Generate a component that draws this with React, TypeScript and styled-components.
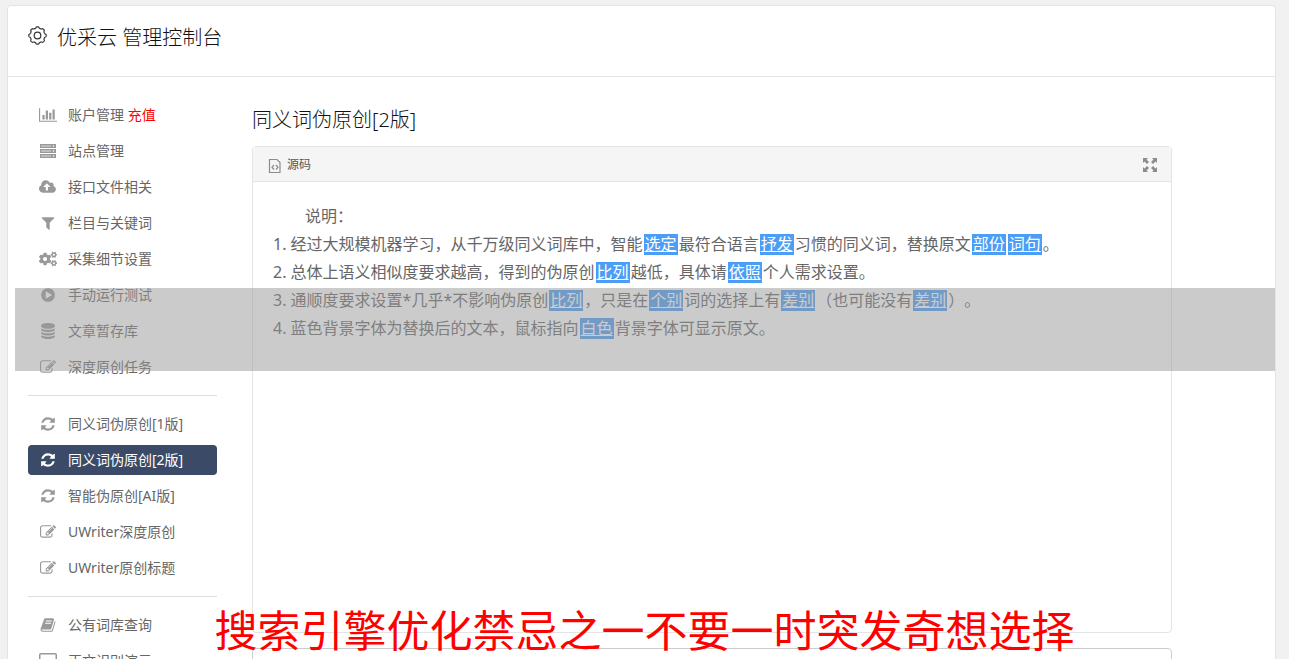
import React, { ReactNode } from "react";
import styled, { createGlobalStyle, css } from "styled-components";
import { FaCogs } from "react-icons/fa";

const Global = createGlobalStyle`
  *, *::before, *::after { box-sizing: border-box; }
  body {
    margin: 0;
    background: #f1f1f1;
    color: #666;
    font-family: "Noto Sans", "Noto Sans CJK SC", sans-serif;
    font-size: 14px;
    line-height: 20px;
    text-spacing-trim: space-all;
  }
  #root { height: 100vh; overflow: hidden; }
`;

const Page = styled.div`
  position: relative;
  height: 100vh;
  overflow: hidden;
  padding: 5px 13px 0 7px;
`;

const Panel = styled.div`
  min-height: 900px;
  background: #fff;
  border: 1px solid #e4e4e4;
  border-radius: 4px;
`;

const Header = styled.header`
  display: flex;
  align-items: center;
  gap: 9px;
  height: 71px;
  padding: 0 20px 6px;
  border-bottom: 1px solid #e4e4e4;
`;

const Title = styled.h1`
  margin: 0;
  color: #111;
  font-size: 20px;
  font-weight: 300;
  line-height: 28px;
`;

const Columns = styled.div`
  display: flex;
  padding: 23px 103px 0 20px;
`;

const Sidebar = styled.nav`
  flex: none;
  width: 189px;
  margin-right: 35px;
`;

const Group = styled.ul`
  margin: 0;
  padding: 0 0 13px;
  list-style: none;

  & + & {
    border-top: 1px solid #ddd;
    padding-top: 13px;
  }
`;

const Item = styled.li`
  & + & { margin-top: 6px; }
`;

const ItemLink = styled.a<{ $active?: boolean }>`
  display: flex;
  align-items: center;
  height: 30px;
  padding: 0 10px;
  gap: 10px;
  border-radius: 4px;
  color: #666;
  text-decoration: none;
  white-space: nowrap;
  svg { color: #999; }
  ${(p) =>
    p.$active &&
    css`
      background: #3b4b67;
      color: #fff;
      svg { color: #fff; }
    `}
`;

const IconSlot = styled.span`
  display: flex;
  justify-content: center;
  width: 20px;
`;

const Recharge = styled.span`
  color: #f00;
`;

const Main = styled.main`
  flex: 1;
  min-width: 0;
`;

const Heading = styled.h2`
  margin: 5px 0 11px;
  color: #111;
  font-size: 20px;
  font-weight: 300;
  line-height: 30px;
`;

const Editor = styled.section`
  height: 487px;
  border: 1px solid #e4e4e4;
  border-radius: 4px;
`;

const Toolbar = styled.div`
  display: flex;
  align-items: center;
  justify-content: space-between;
  height: 35px;
  padding: 1px 13px 0 15px;
  background: #f5f5f5;
  border-bottom: 1px solid #e4e4e4;
`;

const ToolButton = styled.button`
  display: flex;
  align-items: center;
  gap: 6px;
  padding: 0;
  border: 0;
  background: none;
  color: #555;
  font: inherit;
  font-size: 12px;
  svg { color: #8c8c8c; }
`;

const Content = styled.div`
  padding: 20px;
  font-size: 16px;
  line-height: 28px;
`;

const Intro = styled.p`
  margin: 0;
  text-indent: 2em;
`;

const Line = styled.p`
  margin: 0;
`;

const Swap = styled.u`
  margin: 0 1px;
  padding: 0 1px;
  background: linear-gradient(#4b9df5, #4b9df5) center / 100% 21px no-repeat;
  color: #fff;
`;

const Output = styled.textarea`
  display: block;
  width: 100%;
  height: 120px;
  margin-top: 15px;
  border: 1px solid #ccc;
  border-radius: 4px;
  resize: none;
`;

const Shade = styled.div`
  position: absolute;
  top: 288px;
  right: 14px;
  left: 15px;
  height: 83px;
  background: rgba(151, 151, 151, 0.5);
`;

const Caption = styled.p`
  position: absolute;
  right: 0;
  bottom: 0;
  left: 0;
  margin: 0;
  color: #f00;
  font-size: 43px;
  line-height: 56px;
  text-align: center;
  white-space: nowrap;
`;

const Glyph = ({ d, w = 1792, size = 16 }: { d: string; w?: number; size?: number }) => (
  <svg height={size} width={Math.round((size * w) / 1792)} viewBox={`0 0 ${w} 1792`} fill="currentColor" aria-hidden="true">
    <path d={d} />
  </svg>
);

const paths = {
  chart: "M640 896v512h-256v-512h256zm384-512v1024h-256v-1024h256zm1024 1152v128h-2048v-1536h128v1408h1920zm-640-896v768h-256v-768h256zm384-384v1152h-256v-1152h256z",
  cloud: "M1280 864q0-14-9-23l-352-352q-9-9-23-9t-23 9l-351 351q-10 12-10 24 0 14 9 23t23 9h224v352q0 13 9.5 22.5t22.5 9.5h192q13 0 22.5-9.5t9.5-22.5v-352h224q13 0 22.5-9.5t9.5-22.5zm640 288q0 159-112.5 271.5t-271.5 112.5h-1088q-185 0-316.5-131.5t-131.5-316.5q0-130 70-240t188-165q-2-30-2-43 0-212 150-362t362-150q156 0 285.5 87t188.5 231q71-62 166-62 106 0 181 75t75 181q0 76-41 138 130 31 213.5 135.5t83.5 238.5z",
  filter: "M1595 295q17 41-14 70l-493 493v742q0 42-39 59-13 5-25 5-27 0-45-19l-256-256q-19-19-19-45v-486l-493-493q-31-29-14-70 17-39 59-39h1280q42 0 59 39z",
  play: "M896 128q209 0 385.500 103t279.500 279.500 103 385.500-103 385.500-279.500 279.500-385.500 103-385.500-103-279.500-279.500-103-385.500 103-385.500 279.500-279.500 385.500-103zm384 823q32-18 32-55t-32-55l-544-320q-31-19-64-1-32 19-32 56v640q0 37 32 56 16 8 32 8 17 0 32-9z",
  database: "M896 768q237 0 443-43t325-127v170q0 69-103 128t-280 93.5-385 34.5-385-34.5-280-93.5-103-128v-170q119 84 325 127t443 43zm0 768q237 0 443-43t325-127v170q0 69-103 128t-280 93.5-385 34.5-385-34.5-280-93.5-103-128v-170q119 84 325 127t443 43zm0-384q237 0 443-43t325-127v170q0 69-103 128t-280 93.5-385 34.5-385-34.5-280-93.5-103-128v-170q119 84 325 127t443 43zm0-1152q208 0 385 34.500t280 93.500 103 128v128q0 69-103 128t-280 93.500-385 34.500-385-34.500-280-93.500-103-128v-128q0-69 103-128t280-93.500 385-34.500z",
  edit: "M888 1184l116-116-152-152-116 116v56h96v96h56zm440-720q-16-16-33 1l-350 350q-17 17-1 33t33-1l350-350q17-17 1-33zm80 594v190q0 119-84.5 203.5t-203.500 84.500h-832q-119 0-203.500-84.500t-84.500-203.500v-832q0-119 84.500-203.500t203.500-84.500h832q63 0 117 25 15 7 18 23 3 17-9 29l-49 49q-14 14-32 8-23-6-45-6h-832q-66 0-113 47t-47 113v832q0 66 47 113t113 47h832q66 0 113-47t47-113v-126q0-13 9-22l64-64q15-15 35-7t20 29zm-96-738l288 288-672 672h-288v-288zm444 132l-92 92-288-288 92-92q28-28 68-28t68 28l152 152q28 28 28 68t-28 68z",
  refresh: "M1639 1056q0 5-1 7-64 268-268 434.5t-478 166.5q-146 0-282.5-55t-243.5-157l-129 129q-19 19-45 19t-45-19-19-45v-448q0-26 19-45t45-19h448q26 0 45 19t19 45-19 45l-137 137q71 66 161 102t187 36q134 0 250-65t186-179q11-17 53-117 8-23 30-23h192q13 0 22.5 9.5t9.5 22.5zm25-800v448q0 26-19 45t-45 19h-448q-26 0-45-19t-19-45 19-45l138-138q-148-137-349-137-134 0-250 65t-186 179q-11 17-53 117-8 23-30 23h-199q-13 0-22.5-9.5t-9.5-22.5v-7q65-268 270-434.5t480-166.5q146 0 284 55.5t245 156.5l130-129q19-19 45-19t45 19 19 45z",
  book: "M1703 478q40 57 18 129l-275 906q-19 64-76.5 107.5t-122.5 43.5h-923q-77 0-148.5-53.5t-99.5-131.5q-24-67-2-127 0-4 3-27t4-37q1-8-3-21.5t-3-19.5q2-11 8-21t16.5-23.5 16.5-23.5q23-38 45-91.5t30-91.5q3-10 .5-30t-.5-28q3-11 17-28t17-23q21-36 42-92t25-90q1-9-2.5-32t.5-28q4-13 22-30.5t22-22.5q19-26 42.5-84.5t27.5-96.5q1-8-3-25.5t-2-26.5q2-8 9-18t18-23 17-21q8-12 16.5-30.5t15-35 16-36 19.5-32 26.5-23.5 36-11.5 47.5 5.5l-1 3q38-9 51-9h761q74 0 114 56t18 130l-274 906q-36 119-71.5 153.5t-128.5 34.5h-869q-27 0-38 15-11 16-1 43 24 70 144 70h923q29 0 56-15.5t35-41.5l300-987q7-22 5-57 38 15 59 43zm-1064 2q-4 13 2 22.5t20 9.5h608q13 0 25.5-9.5t16.5-22.5l21-64q4-13-2-22.5t-20-9.5h-608q-13 0-25.5 9.5t-16.5 22.5zm-83 256q-4 13 2 22.5t20 9.5h608q13 0 25.5-9.5t16.5-22.5l21-64q4-13-2-22.5t-20-9.5h-608q-13 0-25.5 9.5t-16.5 22.5z",
};

const ServerIcon = () => (
  <svg width="16" height="14" viewBox="0 0 16 14" aria-hidden="true">
    {[0, 5, 10].map((y) => (
      <g key={y}>
        <rect y={y} width="16" height="4" fill="currentColor" />
        <path d={`M1 ${y + 2}h10`} stroke="#fff" strokeWidth="2" opacity="0.35" />
        <circle cx="13.5" cy={y + 2} r="0.8" fill="#fff" />
      </g>
    ))}
  </svg>
);

const ScreenIcon = () => (
  <svg width="18" height="16" viewBox="0 0 18 16" fill="none" stroke="currentColor" aria-hidden="true">
    <rect x="0.75" y="0.75" width="16.5" height="11.500" rx="1" strokeWidth="1.500" />
    <path d="M5 15h8" strokeWidth="1.500" />
  </svg>
);

const gearOutline = (() => {
  const pts: string[] = [];
  for (let i = 0; i <= 160; i++) {
    const a = (i / 160) * Math.PI * 2;
    const r = 8 + 0.7 * Math.tanh(2 * Math.cos(8 * a));
    pts.push(`${(10 + r * Math.sin(a)).toFixed(2)} ${(10 - r * Math.cos(a)).toFixed(2)}`);
  }
  return `M${pts.join("L")}Z`;
})();

const GearIcon = () => (
  <svg width="20" height="20" viewBox="0.500 2.500 20 20" fill="none" stroke="#333" strokeWidth="1.200" overflow="visible" aria-hidden="true">
    <path d={gearOutline} />
    <circle cx="10" cy="10" r="3.300" />
  </svg>
);

const SourceIcon = () => (
  <svg width="13" height="16" viewBox="-1 -2 13 16" fill="none" stroke="currentColor" aria-hidden="true">
    <path d="M.5 .5h7.500l3 3v10h-10.500z" strokeWidth="1.200" />
    <path d="M5 6L3 8.250l2 2.250M7 6l2 2.250L7 10.500" strokeWidth="1.200" />
  </svg>
);

const ExpandIcon = () => (
  <svg width="16" height="16" viewBox="0 0 16 16" fill="currentColor" aria-hidden="true">
    {[0, 90, 180, 270].map((r) => (
      <path key={r} transform={`rotate(${r} 8 8)`} d="M1 1h5L4.500 2.500 7 5 5 7 2.500 4.500 1 6z" />
    ))}
  </svg>
);

type Entry = { icon: ReactNode; label: string; extra?: string; active?: boolean };

const groups: Entry[][] = [
  [
    { icon: <Glyph d={paths.chart} w={2048} />, label: "账户管理", extra: "充值" },
    { icon: <ServerIcon />, label: "站点管理" },
    { icon: <Glyph d={paths.cloud} w={2048} />, label: "接口文件相关" },
    { icon: <Glyph d={paths.filter} />, label: "栏目与关键词" },
    { icon: <FaCogs size={18} />, label: "采集细节设置" },
    { icon: <Glyph d={paths.play} />, label: "手动运行测试" },
    { icon: <Glyph d={paths.database} />, label: "文章暂存库" },
    { icon: <Glyph d={paths.edit} />, label: "深度原创任务" },
  ],
  [
    { icon: <Glyph d={paths.refresh} />, label: "同义词伪原创[1版]" },
    { icon: <Glyph d={paths.refresh} />, label: "同义词伪原创[2版]", active: true },
    { icon: <Glyph d={paths.refresh} />, label: "智能伪原创[AI版]" },
    { icon: <Glyph d={paths.edit} />, label: "UWriter深度原创" },
    { icon: <Glyph d={paths.edit} />, label: "UWriter原创标题" },
  ],
  [
    { icon: <Glyph d={paths.book} />, label: "公有词库查询" },
    { icon: <ScreenIcon />, label: "正文识别演示" },
  ],
];

export default function App() {
  return (
    <Page>
      <Global />
      <Panel>
        <Header>
          <GearIcon />
          <Title>优采云 管理控制台</Title>
        </Header>
        <Columns>
          <Sidebar>
            {groups.map((group, i) => (
              <Group key={i}>
                {group.map((item) => (
                  <Item key={item.label}>
                    <ItemLink href="#" $active={item.active}>
                      <IconSlot>{item.icon}</IconSlot>
                      <span>
                        {item.label}
                        {item.extra && <Recharge> {item.extra}</Recharge>}
                      </span>
                    </ItemLink>
                  </Item>
                ))}
              </Group>
            ))}
          </Sidebar>
          <Main>
            <Heading>同义词伪原创[2版]</Heading>
            <Editor>
              <Toolbar>
                <ToolButton type="button"><SourceIcon />源码</ToolButton>
                <ToolButton type="button" aria-label="全屏"><ExpandIcon /></ToolButton>
              </Toolbar>
              <Content>
                <Intro>说明：</Intro>
                <Line>1. 经过大规模机器学习，从千万级同义词库中，智能<Swap>选定</Swap>最符合语言<Swap>抒发</Swap>习惯的同义词，替换原文<Swap>部份</Swap><Swap>词句</Swap>。</Line>
                <Line>2. 总体上语义相似度要求越高，得到的伪原创<Swap>比列</Swap>越低，具体请<Swap>依照</Swap>个人需求设置。</Line>
                <Line>3. 通顺度要求设置*几乎*不影响伪原创<Swap>比列</Swap>，只是在<Swap>个别</Swap>词的选择上有<Swap>差别</Swap>（也可能没有<Swap>差别</Swap>）。</Line>
                <Line>4. 蓝色背景字体为替换后的文本，鼠标指向<Swap>白色</Swap>背景字体可显示原文。</Line>
              </Content>
            </Editor>
            <Output aria-label="原文" />
          </Main>
        </Columns>
      </Panel>
      <Shade />
      <Caption>搜索引擎优化禁忌之一不要一时突发奇想选择</Caption>
    </Page>
  );
}
